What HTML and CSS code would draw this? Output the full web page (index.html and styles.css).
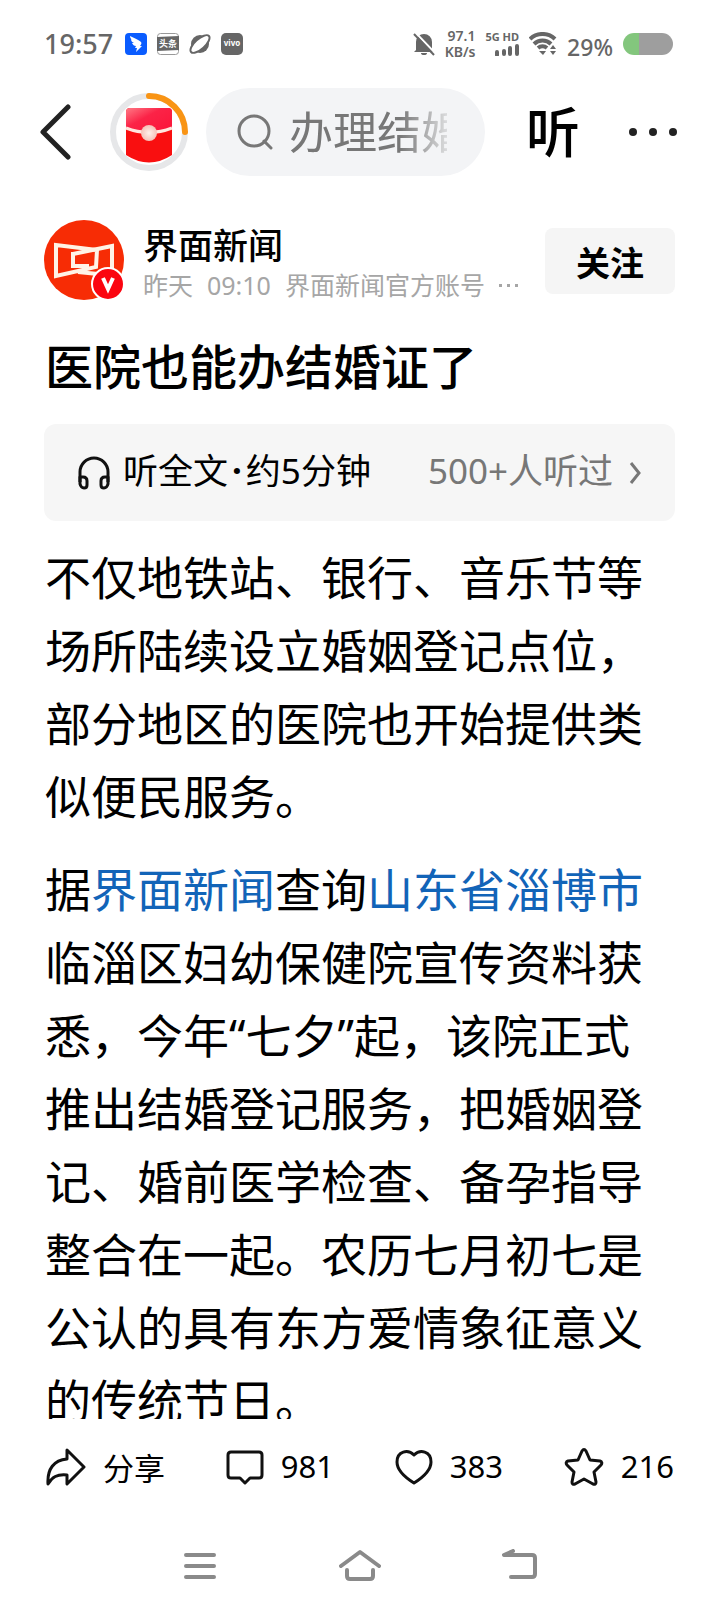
FILE: index.html
```
<!DOCTYPE html>
<html lang="zh-CN">
<head>
    <meta charset="UTF-8">
    <meta name="viewport" content="width=device-width, initial-scale=1.0">
    <title>医院也能办结婚证了</title>
    <link rel="stylesheet" href="styles.css">
</head>
<body>
    <div class="page">
        <div class="status">
            <div class="status-left">
                <span class="time">19:57</span>
                <svg width="22" height="22" viewBox="0 0 22 22">
                    <rect width="22" height="22" rx="4" fill="#0a5cff"/>
                    <path d="M5 3c4 2 9 4 11 6 1 1 0 3-1 4h2l-6 6 1-4h-2l1-2c-2 0-3-1-4-3l2 0C7 9 6 8 6 6l2 1C6 6 5 5 5 3z" fill="#fff"/>
                </svg>
                <svg width="22" height="22" viewBox="0 0 22 22">
                    <rect x="0.5" y="0.5" width="21" height="21" rx="3" fill="#fff" stroke="#999"/>
                    <path d="M0 4l22-1v14L0 18z" fill="#666"/>
                    <text x="11" y="14" class="toutiao">头条</text>
                </svg>
                <svg width="22" height="22" viewBox="0 0 22 22">
                    <circle cx="11" cy="11" r="9" fill="#666"/>
                    <ellipse cx="11" cy="11" rx="12" ry="5" transform="rotate(-42 11 11)" fill="#fff" stroke="#666" stroke-width="2"/>
                </svg>
                <svg width="22" height="22" viewBox="0 0 22 22">
                    <rect width="22" height="22" rx="5" fill="#666"/>
                    <text x="11" y="13" class="vivo">vivo</text>
                </svg>
            </div>
            <div class="status-right">
                <svg width="22" height="24" viewBox="0 0 22 24">
                    <path d="M3 18V10a8 8 0 0 1 16 0v8l2 2H1zM8 21h6a3 2 0 0 1-6 0z" fill="#666"/>
                    <path d="M2 0l21 22" stroke="#fff" stroke-width="2"/>
                    <path d="M1 2l20 21" stroke="#666" stroke-width="2"/>
                </svg>
                <div class="speed"><span>97.1</span><span>KB/s</span></div>
                <div class="signal">
                    <span>5G HD</span>
                    <svg width="24" height="12" viewBox="0 0 24 12">
                        <path d="M2 11V8M9 10V7M15 10V4M22 10V2" stroke="#666" stroke-width="4" stroke-linecap="round"/>
                    </svg>
                </div>
                <svg width="28" height="24" viewBox="0 0 28 24">
                    <path d="M1 7a18 18 0 0 1 25 0M5 12a12 12 0 0 1 17 0M9 16a7 7 0 0 1 9 0" fill="none" stroke="#666" stroke-width="4"/>
                    <path d="M10 19h7l-3 4zM21 17l3-4 3 4zM21 19l3 4 3-4z" fill="#666"/>
                </svg>
                <span class="percent">29%</span>
                <span class="battery"></span>
            </div>
        </div>

        <header class="topbar">
            <button class="back" aria-label="返回">
                <svg width="32" height="56" viewBox="0 0 32 56">
                    <path d="M28 3L3 28l25 25" fill="none" stroke="#222" stroke-width="5" stroke-linecap="round" stroke-linejoin="round"/>
                </svg>
            </button>
            <button class="packet" aria-label="红包">
                <svg width="80" height="80" viewBox="0 0 80 80">
                    <defs>
                        <linearGradient id="flap" x1="0" y1="0" x2="1" y2="1">
                            <stop offset="0" stop-color="#ff7a86"/>
                            <stop offset="0.4" stop-color="#fb2347"/>
                            <stop offset="1" stop-color="#fb1438"/>
                        </linearGradient>
                        <radialGradient id="seal">
                            <stop offset="0" stop-color="#fff0ea"/>
                            <stop offset="1" stop-color="#f5c1b8"/>
                        </radialGradient>
                    </defs>
                    <circle cx="40" cy="40" r="36" fill="#fff" stroke="#e6e7e9" stroke-width="6"/>
                    <path d="M40 4a36 36 0 0 1 36 36" fill="none" stroke="#f99414" stroke-width="6" stroke-linecap="round"/>
                    <path d="M17 20q0-4 4-4h38q4 0 4 4v43q-23 15-46 0z" fill="#f90f10"/>
                    <path d="M17 20q0-4 4-4h38q4 0 4 4v17q-23 8-46 0z" fill="url(#flap)"/>
                    <path d="M17 36q23 9 46 0" fill="none" stroke="#ffe6dd" stroke-width="3"/>
                    <circle cx="40" cy="41" r="8" fill="url(#seal)"/>
                </svg>
            </button>
            <label class="search">
                <svg width="36" height="36" viewBox="0 0 36 36">
                    <circle cx="17" cy="17" r="15" fill="none" stroke="#777" stroke-width="3"/>
                    <path d="M27 27l7 7" stroke="#777" stroke-width="3" stroke-linecap="round"/>
                </svg>
                <input type="text" placeholder="办理结婚登记" aria-label="搜索">
            </label>
            <button class="listen">听</button>
            <button class="more" aria-label="更多">
                <svg width="50" height="10" viewBox="0 0 50 10">
                    <circle cx="5" cy="5" r="4" fill="#222"/>
                    <circle cx="25" cy="5" r="4" fill="#222"/>
                    <circle cx="45" cy="5" r="4" fill="#222"/>
                </svg>
            </button>
        </header>

        <main class="article">
            <div class="author">
                <svg width="80" height="80" viewBox="0 0 80 80">
                    <circle cx="40" cy="40" r="40" fill="#f72c05"/>
                    <g fill="none" stroke="#fff3e6" stroke-width="4">
                        <path d="M53 30L12 25v31l40-9z"/>
                        <path d="M29 34l39-8v28l-14-2M29 32v14h16"/>
                        <path d="M34 52l20 2"/>
                    </g>
                    <circle cx="64" cy="64" r="16" fill="#fb0510" stroke="#fff" stroke-width="2"/>
                    <path d="M59 58l5 11 5-11" fill="none" stroke="#fff" stroke-width="4"/>
                </svg>
                <div class="author-text">
                    <div class="name">界面新闻</div>
                    <div class="meta">
                        <span>昨天</span>
                        <span>09:10</span>
                        <span>界面新闻官方账号</span>
                        <svg width="20" height="4" viewBox="0 0 20 4">
                            <path d="M0 1h3v3H0zM8 1h3v3H8zM16 1h3v3h-3z" fill="#a6a6a6"/>
                        </svg>
                    </div>
                </div>
                <button class="follow">关注</button>
            </div>

            <h1>医院也能办结婚证了</h1>

            <button class="audio">
                <svg width="32" height="34" viewBox="0 0 32 34">
                    <g fill="none" stroke="#111" stroke-width="3" stroke-linejoin="round">
                        <path d="M2 26V16a14 14 0 0 1 28 0v10"/>
                        <path d="M2 21h3q4 0 4 4v4q0 3-3 3t-4-4zM30 21h-3q-4 0-4 4v4q0 3 3 3t4-4z"/>
                    </g>
                </svg>
                <span class="duration">听全文<b>·</b>约5分钟</span>
                <span class="heard">500+人听过</span>
                <svg width="12" height="26" viewBox="0 0 12 26">
                    <path d="M2 3l8 10-8 10" fill="none" stroke="#777" stroke-width="3"/>
                </svg>
            </button>

            <p>不仅地铁站、银行、音乐节等场所陆续设立婚姻登记点位，部分地区的医院也开始提供类似便民服务。</p>
            <p>据<a href="#">界面新闻</a>查询<a href="#">山东省淄博市</a>临淄区妇幼保健院宣传资料获悉，今年“七夕”起，该院正式推出结婚登记服务，把婚姻登记、婚前医学检查、备孕指导整合在一起。农历七月初七是公认的具有东方爱情象征意义的传统节日。</p>
        </main>

        <footer class="actions">
            <button>
                <svg width="40" height="38" viewBox="0 0 40 38">
                    <path d="M21 2l17 17-17 17v-9C11 26 6 29 2 36 1 21 8 12 21 11z" fill="none" stroke="#111" stroke-width="3" stroke-linejoin="round"/>
                </svg>
                <span>分享</span>
            </button>
            <button>
                <svg width="38" height="38" viewBox="0 0 38 38">
                    <path d="M5 4h28q3 0 3 3v20q0 3-3 3h-9l-5 5-5-5H5q-3 0-3-3V7q0-3 3-3z" fill="none" stroke="#111" stroke-width="3" stroke-linejoin="round"/>
                </svg>
                <span>981</span>
            </button>
            <button>
                <svg width="38" height="38" viewBox="0 0 38 38">
                    <path d="M19 7C13 1 2 3 2 14c0 9 9 16 17 21 8-5 17-12 17-21C36 3 25 1 19 7z" fill="none" stroke="#111" stroke-width="3" stroke-linejoin="round"/>
                </svg>
                <span>383</span>
            </button>
            <button>
                <svg width="40" height="38" viewBox="0 0 40 38">
                    <path d="M18 3q2-3 4 0l4 9 10 1q3 1 1 4l-7 7 2 10q0 3-3 2l-9-5-9 5q-3 1-3-2l2-10-7-7q-2-3 1-4l10-1z" fill="none" stroke="#111" stroke-width="3" stroke-linejoin="round"/>
                </svg>
                <span>216</span>
            </button>
        </footer>

        <nav class="sysnav">
            <button aria-label="菜单">
                <svg width="34" height="34" viewBox="0 0 34 34">
                    <path d="M3 6h28M3 17h28M3 28h28" stroke="#8a8a8a" stroke-width="4" stroke-linecap="round"/>
                </svg>
            </button>
            <button aria-label="主页">
                <svg width="42" height="34" viewBox="0 0 42 34">
                    <path d="M2 17L21 3l19 14M8 21v6q0 3 3 3h20q3 0 3-3v-6" fill="none" stroke="#8a8a8a" stroke-width="4" stroke-linecap="round" stroke-linejoin="round"/>
                </svg>
            </button>
            <button aria-label="后退">
                <svg width="36" height="34" viewBox="0 0 36 34">
                    <path d="M11 2L2 6h28q3 0 3 3v16q0 3-3 3H9" fill="none" stroke="#8a8a8a" stroke-width="4" stroke-linecap="round" stroke-linejoin="round"/>
                </svg>
            </button>
        </nav>
    </div>
</body>
</html>
```

FILE: styles.css
```
* {
    box-sizing: border-box;
}

body {
    margin: 0;
    background-color: #fff;
    color: #000;
    font-family: "Noto Sans", "Noto Sans CJK SC", sans-serif;
}

button {
    display: flex;
    align-items: center;
    padding: 0;
    border: none;
    background: none;
    color: inherit;
    font-family: inherit;
    cursor: pointer;
}

svg {
    display: block;
    flex-shrink: 0;
}

.page {
    display: flex;
    flex-direction: column;
    height: 100vh;
}

/* status bar */
.status {
    display: flex;
    justify-content: space-between;
    align-items: center;
    height: 88px;
    padding: 0 47px 0 44px;
    color: #666;
}

.status-left,
.status-right {
    display: flex;
    align-items: center;
    gap: 10px;
}

.time {
    margin-right: 2px;
    font-size: 27px;
    font-weight: 500;
    line-height: 30px;
}

.toutiao {
    fill: #fff;
    font-size: 9px;
    font-weight: bold;
    text-anchor: middle;
}

.vivo {
    fill: #fff;
    font-size: 8px;
    font-weight: bold;
    text-anchor: middle;
}

.speed,
.signal {
    display: flex;
    flex-direction: column;
    align-items: flex-end;
}

.speed {
    font-size: 14px;
    font-weight: 600;
    line-height: 16px;
}

.signal {
    gap: 2px;
    font-size: 11px;
    font-weight: bold;
    line-height: 10px;
}

.percent {
    padding-top: 6px;
    font-size: 23px;
    font-weight: 500;
    line-height: 24px;
}

.battery {
    width: 50px;
    height: 22px;
    border-radius: 11px;
    background: linear-gradient(to right, #83c67d 32%, #9e9e9e 32%);
}

/* top bar */
.topbar {
    display: flex;
    align-items: center;
    height: 88px;
    padding: 0 42px 0 40px;
}

.packet {
    margin: 0 17px 0 37px;
}

.search {
    display: flex;
    flex: 1;
    align-items: center;
    gap: 16px;
    min-width: 0;
    height: 88px;
    padding: 0 38px 0 31px;
    border-radius: 44px;
    background-color: #f3f4f6;
}

.search input {
    flex: 1;
    min-width: 0;
    height: 64px;
    padding: 0;
    border: none;
    outline: none;
    background: none;
    font-family: inherit;
    font-size: 44px;
    -webkit-mask-image: linear-gradient(to right, #000 70%, rgba(0, 0, 0, 0.2) 100%);
    mask-image: linear-gradient(to right, #000 70%, rgba(0, 0, 0, 0.2) 100%);
}

.search input::placeholder {
    color: #777;
    opacity: 1;
}

.listen {
    margin: 0 48px 0 41px;
    font-size: 54px;
    font-weight: 500;
    line-height: 64px;
}

/* article */
.article {
    flex: 1;
    min-height: 0;
    padding: 44px 45px 0 44px;
    overflow: hidden;
}

.author {
    display: flex;
    align-items: flex-start;
    gap: 19px;
}

.author-text {
    flex: 1;
    min-width: 0;
    padding-top: 6px;
}

.name {
    font-size: 35px;
    font-weight: 500;
    line-height: 40px;
}

.meta {
    display: flex;
    align-items: center;
    gap: 14px;
    color: #a6a6a6;
    font-size: 25px;
    line-height: 38px;
    white-space: nowrap;
}

.follow {
    justify-content: center;
    width: 130px;
    height: 66px;
    margin-top: 8px;
    border-radius: 8px;
    background-color: #f5f5f5;
    font-size: 34px;
    font-weight: bold;
}

h1 {
    margin: 28px 0 22px;
    padding-left: 1px;
    font-size: 48px;
    font-weight: 500;
    line-height: 70px;
}

.audio {
    width: 100%;
    height: 97px;
    padding: 0 34px;
    border-radius: 12px;
    background-color: #f6f6f6;
    font-size: 35px;
    line-height: 52px;
}

.audio span {
    padding-bottom: 3px;
}

.duration {
    margin-left: 13px;
}

.duration b {
    margin: 0 4px;
}

.heard {
    margin: 0 16px 0 auto;
    color: #777;
}

p {
    margin: 20px 0;
    padding-left: 1px;
    font-size: 46px;
    line-height: 73px;
}

a {
    color: #1264b8;
    text-decoration: none;
}

/* bottom bars */
.actions {
    display: flex;
    justify-content: space-between;
    align-items: center;
    height: 96px;
    padding: 0 46px;
}

.actions button {
    gap: 17px;
    font-size: 31px;
}

.actions span {
    padding-bottom: 2px;
}

.sysnav {
    display: flex;
    justify-content: center;
    align-items: center;
    height: 93px;
    padding-top: 8px;
}

.sysnav button {
    justify-content: center;
    width: 160px;
    height: 64px;
}
```
